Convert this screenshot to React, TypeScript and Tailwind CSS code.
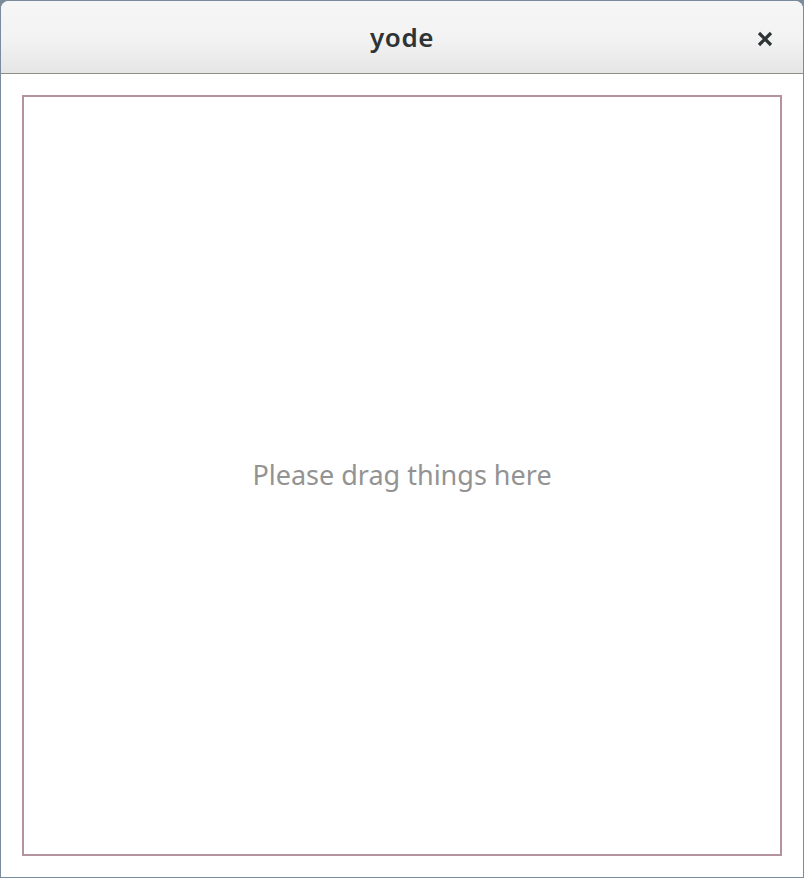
import React from "react";

export default function App() {
  return (
    <div className="w-[804px] h-[878px] bg-[#7a8c9c] p-px" style={{ fontFamily: '"Noto Sans", "Open Sans", sans-serif' }}>
      <div className="flex h-full w-full flex-col overflow-hidden rounded-t-[8px] bg-white">
        <div className="relative flex h-[73px] shrink-0 items-center justify-center border-b border-[#8e8e88] bg-gradient-to-b from-[#f6f6f6] via-[#f3f3f3] to-[#e6e6e6]">
          <span className="text-[26px] font-semibold text-[#2e3436] tracking-[0.5px]">yode</span>
          <svg className="absolute right-[30px] top-[30px]" width="16" height="16" viewBox="0 0 16 16">
            <path d="M2 2 L14 14 M14 2 L2 14" stroke="#2e3436" strokeWidth="3.2" strokeLinecap="butt" fill="none" />
          </svg>
        </div>
        <div className="flex flex-1 p-[21px]">
          <div className="flex flex-1 items-center justify-center border-2 border-[#b4939f]">
            <span className="text-[27px] text-[#939393]">Please drag things here</span>
          </div>
        </div>
      </div>
    </div>
  );
}
